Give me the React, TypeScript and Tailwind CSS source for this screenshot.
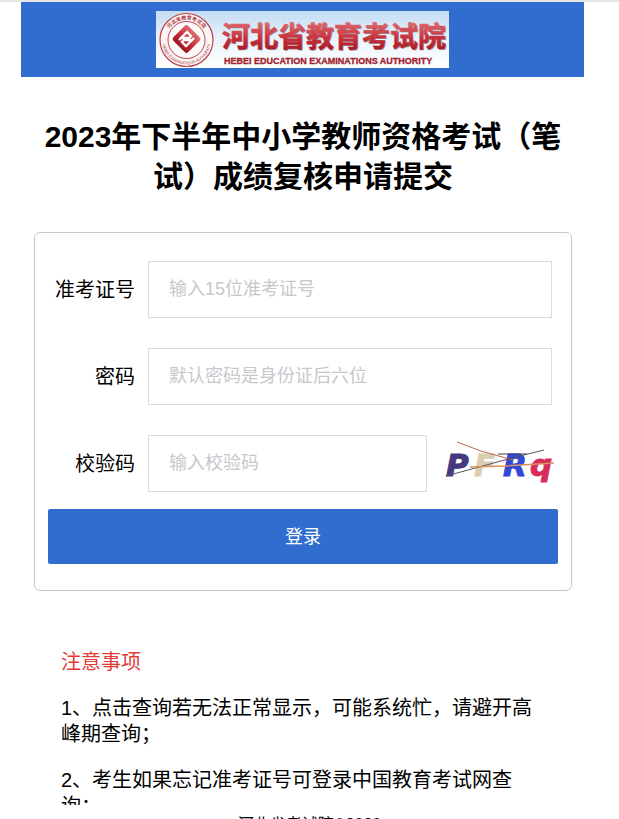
import { useState } from "react";
import type { FormEvent, ReactNode } from "react";

const notices = [
  "1、点击查询若无法正常显示，可能系统忙，请避开高峰期查询；",
  "2、考生如果忘记准考证号可登录中国教育考试网查询；",
];

const inputClass =
  "h-[57px] min-w-0 border border-[#dcdcdc] bg-white px-5 text-lg text-black outline-none placeholder:text-[#c8c8cc] focus:border-[#306dcf]";

function Logo() {
  return (
    <svg
      className="h-[57px] w-[293px]"
      viewBox="0 0 293 57"
      role="img"
      aria-label="河北省教育考试院"
    >
      <defs>
        <linearGradient id="sky" x1="0" y1="0" x2="0" y2="1">
          <stop offset="0" stopColor="#c3dcf4" />
          <stop offset="0.5" stopColor="#eaf3fb" />
          <stop offset="1" stopColor="#ffffff" />
        </linearGradient>
        <linearGradient id="red" x1="0" y1="0" x2="0" y2="1">
          <stop offset="0" stopColor="#de6a70" />
          <stop offset="0.5" stopColor="#c8323c" />
          <stop offset="1" stopColor="#a01420" />
        </linearGradient>
        <path id="sealTop" d="M10 29a20.500 20.500 0 0 1 41 0" />
        <path id="sealBottom" d="M6 29a24.500 24.500 0 0 0 49 0" />
      </defs>
      <rect width="293" height="57" fill="url(#sky)" />

      {/* Seal */}
      <circle cx="30.500" cy="29" r="26.500" fill="#fbf3f4" stroke="#b8434c" strokeWidth="1.200" />
      <circle cx="30.500" cy="29" r="18.500" fill="#fdfafa" stroke="#b8434c" strokeWidth="1" />
      <text className="font-bold" fontSize="5" fill="#b03a44" textAnchor="middle">
        <textPath href="#sealTop" startOffset="50%">
          河北省教育考试院
        </textPath>
      </text>
      <text fontSize="4" fill="#b03a44" textAnchor="middle">
        <textPath href="#sealBottom" startOffset="50%">
          HEBEI EXAMINATIONS AUTHORITY
        </textPath>
      </text>
      <rect x="20.500" y="18" width="20" height="20" rx="2" fill="url(#red)" stroke="url(#red)" strokeWidth="1" transform="rotate(45 30.500 28)" />
      <g fill="none" stroke="#fff" strokeWidth="2.400" strokeLinejoin="miter">
        <path d="M23 29l8-8 4 4-4 4h6" />
        <path d="M38 27l-8 8-4-4 4-4h-6" />
      </g>

      <g className="font-bold">
        <text x="67" y="37" fontSize="28" fill="#a08a94">
          河北省教育考试院
        </text>
        <text x="66" y="36" fontSize="28" fill="url(#red)" stroke="url(#red)" strokeWidth="0.600">
          河北省教育考试院
        </text>
        <text x="68" y="53" fontSize="9" fill="#a3202c" stroke="#a3202c" strokeWidth="0.300">
          HEBEI EDUCATION EXAMINATIONS AUTHORITY
        </text>
      </g>
    </svg>
  );
}

function Captcha() {
  return (
    <svg className="h-12 w-[115px]" viewBox="0 0 115 48" role="img" aria-label="验证码图片">
      <g
        fontFamily="DejaVu Sans, sans-serif"
        fontWeight="bold"
        fontStyle="italic"
        fontSize="31"
        strokeWidth="1"
      >
        <text x="3" y="36" fill="#453a80" stroke="#453a80">P</text>
        <text x="31" y="36" fill="#d9cfb0" stroke="#d9cfb0">F</text>
        <text x="60" y="36" fill="#3347d8" stroke="#3347d8">R</text>
        <text x="87" y="36" fill="#d92b5c" stroke="#d92b5c">q</text>
      </g>
      <g fill="none" strokeWidth="1">
        <path d="M14 2l24 9 32 9" stroke="#c4644c" />
        <path d="M3 36l66-18 32-8" stroke="#555560" />
        <path d="M55 14h29" stroke="#3a3a50" />
        <path d="M27 27l35-1 49-3" stroke="#d9925c" strokeWidth="1.500" />
      </g>
    </svg>
  );
}

function Field({ id, label, children }: { id: string; label: string; children: ReactNode }) {
  return (
    <div className="flex items-center">
      <label htmlFor={id} className="w-[87px] shrink-0 text-right text-xl">
        {label}
      </label>
      <div className="ml-[13px] flex min-w-0 flex-1 items-center">{children}</div>
    </div>
  );
}

export default function App() {
  const [ticket, setTicket] = useState("");
  const [password, setPassword] = useState("");
  const [code, setCode] = useState("");

  const handleSubmit = (e: FormEvent) => {
    e.preventDefault();
  };

  return (
    <div className="flex h-screen flex-col overflow-hidden border-t-2 border-[#e6e6e6] bg-white font-['Liberation_Sans','Noto_Sans_CJK_SC',sans-serif] text-black">
      <div className="min-h-0 flex-1 overflow-hidden pr-[35px] pl-[21px]">
        <header className="flex h-[75px] items-center justify-center bg-[#306dcf]">
          <Logo />
        </header>

        <main className="pr-3 pl-[13px]">
          <h1 className="pt-10 pb-[35px] text-center text-3xl leading-10 font-bold">
            2023年下半年中小学教师资格考试（笔试）成绩复核申请提交
          </h1>

          <form
            onSubmit={handleSubmit}
            className="rounded-md border border-[#c8c8c8] px-[13px] pt-7 pb-[26px]"
          >
            <div className="flex flex-col gap-[30px]">
              <Field id="ticket" label="准考证号">
                <input
                  id="ticket"
                  type="text"
                  placeholder="输入15位准考证号"
                  value={ticket}
                  onChange={(e) => setTicket(e.target.value)}
                  className={`${inputClass} mr-1.5 flex-1`}
                />
              </Field>
              <Field id="password" label="密码">
                <input
                  id="password"
                  type="password"
                  placeholder="默认密码是身份证后六位"
                  value={password}
                  onChange={(e) => setPassword(e.target.value)}
                  className={`${inputClass} mr-1.5 flex-1`}
                />
              </Field>
              <Field id="code" label="校验码">
                <input
                  id="code"
                  type="text"
                  placeholder="输入校验码"
                  value={code}
                  onChange={(e) => setCode(e.target.value)}
                  className={`${inputClass} flex-1`}
                />
                <button type="button" aria-label="刷新验证码" className="ml-4 shrink-0">
                  <Captcha />
                </button>
              </Field>
            </div>
            <button
              type="submit"
              className="mt-[17px] h-[55px] w-full rounded-xs bg-[#306dcf] text-lg text-white"
            >
              登录
            </button>
          </form>

          <section className="px-[27px] pt-[58px] text-xl leading-[26px]">
            <h2 className="text-[#e23c39]">注意事项</h2>
            {notices.map((notice) => (
              <p key={notice} className="mt-5">
                {notice}
              </p>
            ))}
          </section>
        </main>
      </div>

      <footer className="h-3.5 shrink-0 overflow-hidden text-center text-base leading-10">
        河北省考试院©2020
      </footer>
    </div>
  );
}
